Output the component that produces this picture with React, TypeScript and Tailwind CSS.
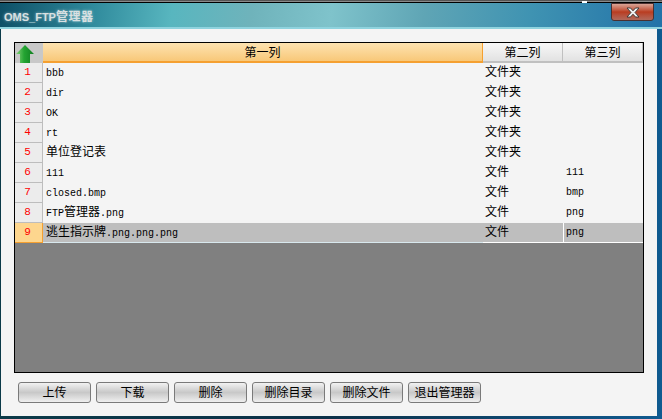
const cjk = "font-['Noto_Sans_CJK_SC','Liberation_Sans',sans-serif]";
const mono = "font-['Liberation_Mono','Noto_Sans_CJK_SC',monospace]";

const rows = [
  { name: [['l', 'bbb']], type: '文件夹', ext: '' },
  { name: [['l', 'dir']], type: '文件夹', ext: '' },
  { name: [['l', 'OK']], type: '文件夹', ext: '' },
  { name: [['l', 'rt']], type: '文件夹', ext: '' },
  { name: [['c', '单位登记表']], type: '文件夹', ext: '' },
  { name: [['l', '111']], type: '文件', ext: '111' },
  { name: [['l', 'closed.bmp']], type: '文件', ext: 'bmp' },
  { name: [['l', 'FTP'], ['c', '管理器'], ['l', '.png']], type: '文件', ext: 'png' },
  { name: [['c', '逃生指示牌'], ['l', '.png.png.png']], type: '文件', ext: 'png' },
];

const buttons = ['上传', '下载', '删除', '删除目录', '删除文件', '退出管理器'];

function UpArrow() {
  return (
    <svg width="20" height="20" viewBox="0 0 20 20">
      <defs>
        <linearGradient id="arrow" x1="0" y1="0" x2="1" y2="0">
          <stop offset="0" stopColor="#86d478" />
          <stop offset="0.45" stopColor="#24a432" />
          <stop offset="1" stopColor="#0f7f20" />
        </linearGradient>
      </defs>
      <path d="M10 2 L19 11 L15 11 L15 20 L5 20 L5 11 L1 11 Z" fill="url(#arrow)" />
    </svg>
  );
}

function HeaderCell({ w, label }: { w: string; label: string }) {
  return (
    <div className={`${w} h-5 shrink-0 pb-px flex items-center justify-center border-r border-b-2 border-r-[#c0c0c0] border-b-[#c0c0c0] bg-gradient-to-b from-[#f8f8f8] to-[#e2e2e2] text-[12px] text-black ${cjk}`}>
      {label}
    </div>
  );
}

export default function App() {
  return (
    <div className="w-[662px] h-[419px] overflow-hidden flex flex-col bg-[#0c3f55]">
      <div className="h-[3px] shrink-0 relative bg-[#8a8a8a] border-t border-b border-t-[#555] border-b-black">
        <div className="absolute left-[582px] top-0 w-[5px] h-[2px] bg-white" />
      </div>
      <div className="h-[26px] shrink-0 relative flex items-center pl-1 bg-[linear-gradient(97deg,#0e4f66_0%,#2f8a9c_14%,#58b6bf_26%,#6fb3bb_38%,#7fc3cb_50%,#5fa5b5_64%,#3f93b2_80%,#2272a8_100%)] border-b-2 border-b-[#8fd3de]">
        <span className="text-[#d8e0e2] font-bold [text-shadow:0_0_3px_rgba(255,255,255,0.5)]">
          <span className="text-[11px] font-['Liberation_Sans',sans-serif]">OMS_FTP</span>
          <span className={`text-[12px] tracking-[0.5px] ${cjk}`}>管理器</span>
        </span>
        <div className="absolute right-[8px] top-0 w-[43px] h-[18px] rounded-b-[3px] flex items-center justify-center bg-gradient-to-b from-[#d8a496] via-[#b93c20] to-[#b0685a] border border-[#4a3030]">
          <svg width="14" height="11" viewBox="0 0 14 11">
            <path d="M1 1 L4.5 1 L7 3.8 L9.5 1 L13 1 L9 5.5 L13 10 L9.5 10 L7 7.2 L4.5 10 L1 10 L5 5.5 Z" fill="#f0f0f0" stroke="#333" strokeWidth="0.9" />
          </svg>
        </div>
      </div>
      <div className="flex-1 flex pl-px pr-[5px] pb-[3px] bg-gradient-to-r from-[#0b3a48] via-[#0b3048] to-[#0f5a90]">
        <div className="flex-1 bg-[#f4f4f4] pt-[13px] pl-[13px]">
          <div className="w-[630px] h-[331px] border border-black bg-[#808080] flex flex-col">
            <div className="flex shrink-0">
              <div className="w-7 h-5 shrink-0 bg-[#c8c8c8] overflow-hidden">
                <UpArrow />
              </div>
              <div className={`w-[440px] h-5 shrink-0 pb-px flex items-center justify-center border-r border-b-2 border-[#f5a030] bg-gradient-to-b from-[#fde3b0] to-[#f8c878] text-[12px] text-black ${cjk}`}>
                第一列
              </div>
              <HeaderCell w="w-20" label="第二列" />
              <HeaderCell w="w-20" label="第三列" />
            </div>
            {rows.map((r, i) => {
              const sel = i === rows.length - 1;
              return (
                <div key={i} className="flex h-5 shrink-0">
                  <div className={`w-7 shrink-0 pr-[2px] flex items-center justify-center border-r border-b text-[11px] text-[#ff0000] ${mono} ${sel ? 'bg-[#fdd68e] border-[#f5a030]' : 'bg-[#ececec] border-[#bdbdbd]'}`}>
                    {i + 1}
                  </div>
                  <div className={`w-[440px] shrink-0 pl-[3px] text-[12px] leading-[16px] text-black border-b ${cjk} ${sel ? 'bg-[#bebebe] border-[#d8e8ee]' : 'bg-[#f4f4f4] border-[#f4f4f4]'}`}>
                    {r.name.map(([k, t], j) => (
                      <span key={j} className={k === 'c' ? '' : `text-[10px] ${mono}`}>{t}</span>
                    ))}
                  </div>
                  <div className={`w-20 shrink-0 pl-[2px] pb-[3px] flex items-center text-[12px] text-black border-b ${cjk} ${sel ? 'bg-[#bebebe] border-white' : 'bg-[#f4f4f4] border-[#f4f4f4]'}`}>
                    {r.type}
                  </div>
                  <div className={`w-20 shrink-0 pl-[2px] flex items-center text-[10px] text-black border-b border-l ${mono} ${sel ? 'bg-[#bebebe] border-white' : 'bg-[#f4f4f4] border-[#f4f4f4]'}`}>
                    {r.ext}
                  </div>
                </div>
              );
            })}
          </div>
          <div className="flex gap-[5px] mt-[9px] ml-1">
            {buttons.map(b => (
              <div key={b} className={`w-[73px] h-[21px] pb-[2px] flex items-center justify-center rounded-[3px] border border-[#7a7a7a] bg-gradient-to-b from-[#f2f2f2] via-[#c8c8c8] to-[#efefef] text-[12px] text-black ${cjk}`}>
                {b}
              </div>
            ))}
          </div>
        </div>
      </div>
    </div>
  );
}
